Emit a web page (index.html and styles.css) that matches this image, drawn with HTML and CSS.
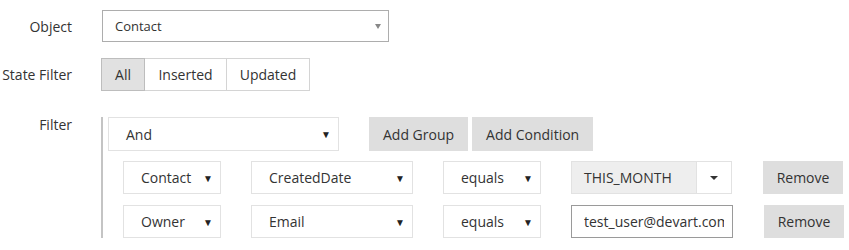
FILE: index.html
```html
<!DOCTYPE html>
<html lang="en">
<head>
    <meta charset="UTF-8">
    <title>Filter</title>
    <link rel="stylesheet" href="styles.css">
</head>
<body>
    <div class="form">
        <div class="field field-object">
            <label class="field-label">Object</label>
            <div class="select select-object">
                <span>Contact</span>
                <span class="arrow-small"></span>
            </div>
        </div>

        <div class="field field-state">
            <label class="field-label">State Filter</label>
            <div class="btn-group">
                <button class="toggle toggle-all active">All</button>
                <button class="toggle toggle-inserted">Inserted</button>
                <button class="toggle toggle-updated">Updated</button>
            </div>
        </div>

        <div class="field field-filter">
            <label class="field-label">Filter</label>
            <div class="group">
                <div class="group-head">
                    <div class="select sel-op">
                        <span>And</span>
                        <span class="arrow">&#9660;</span>
                    </div>
                    <div class="group-actions">
                        <button class="btn btn-group-add">Add Group</button>
                        <button class="btn">Add Condition</button>
                    </div>
                </div>

                <div class="condition">
                    <div class="select sel-entity"><span>Contact</span><span class="arrow">&#9660;</span></div>
                    <div class="select sel-field"><span>CreatedDate</span><span class="arrow">&#9660;</span></div>
                    <div class="select sel-cmp"><span>equals</span><span class="arrow">&#9660;</span></div>
                    <div class="combo">
                        <span class="combo-text">THIS_MONTH</span>
                        <span class="combo-btn"><span class="caret"></span></span>
                    </div>
                    <button class="btn btn-remove">Remove</button>
                </div>

                <div class="condition">
                    <div class="select sel-entity"><span>Owner</span><span class="arrow">&#9660;</span></div>
                    <div class="select sel-field"><span>Email</span><span class="arrow">&#9660;</span></div>
                    <div class="select sel-cmp"><span>equals</span><span class="arrow">&#9660;</span></div>
                    <input class="value-input" type="text" value="test_user@devart.com">
                    <button class="btn btn-remove">Remove</button>
                </div>
            </div>
        </div>
    </div>
</body>
</html>
```

FILE: styles.css
```css
body {
    margin: 0;
    padding: 0;
    background: #fff;
    font-family: "Open Sans", Arial, sans-serif;
    font-size: 14px;
    color: #333;
}

.form {
    padding-top: 10px;
}

.field {
    display: flex;
    align-items: center;
}

.field-label {
    width: 72px;
    margin-right: 29px;
    text-align: right;
    flex-shrink: 0;
    color: #333;
}

.field-object {
    height: 32px;
    margin-bottom: 16px;
}

.field-state {
    height: 33px;
    margin-bottom: 26px;
}

.field-filter {
    align-items: flex-start;
}

.field-filter .field-label {
    line-height: 16px;
}

.select {
    display: flex;
    align-items: center;
    justify-content: space-between;
    box-sizing: border-box;
    border: 1px solid #e2e2e2;
    background: #fff;
    padding: 0 7px 0 17px;
    color: #333;
}

.select-object {
    margin-left: 1px;
    width: 287px;
    height: 32px;
    padding: 0 7px 0 12px;
    border-color: #adadad;
    font-size: 13px;
}

.arrow-small {
    width: 0;
    height: 0;
    border-left: 3px solid transparent;
    border-right: 3px solid transparent;
    border-top: 5px solid #888;
}

.arrow {
    font-size: 10px;
    color: #222;
    line-height: 1;
}

.btn-group {
    display: flex;
}

.toggle {
    font-family: inherit;
    font-size: 14px;
    color: #333;
    height: 33px;
    padding: 0;
    background: #fff;
    border: 1px solid #d4d4d4;
    margin: 0;
    margin-left: -1px;
}

.toggle-all {
    width: 44px;
    margin-left: 0;
}

.toggle-inserted {
    width: 83px;
}

.toggle-updated {
    width: 84px;
}

.toggle.active {
    background: #e1e1e1;
    border-color: #bdbdbd;
    position: relative;
    z-index: 1;
}

.group {
    border-left: 2px solid #c4c4c4;
    padding-left: 5px;
}

.group-head {
    display: flex;
    gap: 30px;
    margin-bottom: 10px;
}

.group-actions {
    display: flex;
    gap: 4px;
}

.sel-op {
    width: 231px;
    height: 34px;
}

.btn {
    font-family: inherit;
    font-size: 14px;
    color: #333;
    background: #dedede;
    border: none;
    height: 34px;
    padding: 0 14px;
    margin: 0;
}

.condition {
    display: flex;
    gap: 30px;
    margin-left: 15px;
    margin-bottom: 11px;
}

.condition:last-child {
    margin-bottom: 0;
}

.condition .select,
.condition .combo,
.condition .value-input,
.condition .btn {
    height: 33px;
}

.sel-entity {
    width: 98px;
}

.sel-field {
    width: 162px;
}

.sel-cmp {
    width: 98px;
}

.combo {
    display: flex;
    width: 161px;
    box-sizing: border-box;
    border: 1px solid #e2e2e2;
}

.combo-text {
    flex: 1;
    display: flex;
    align-items: center;
    padding-left: 12px;
    background: #eee;
    border-right: 1px solid #e2e2e2;
}

.combo-btn {
    width: 34px;
    display: flex;
    align-items: center;
    justify-content: center;
    background: #fff;
}

.caret {
    width: 0;
    height: 0;
    border-left: 4px solid transparent;
    border-right: 4px solid transparent;
    border-top: 4px solid #333;
}

.value-input {
    width: 162px;
    box-sizing: border-box;
    border: 1px solid #9a9a9a;
    padding: 0 8px 0 12px;
    font-family: inherit;
    font-size: 14px;
    color: #333;
    outline: none;
    margin: 0;
}

.btn-remove {
    width: 80px;
    padding: 0;
    margin-left: 1px;
}
```
